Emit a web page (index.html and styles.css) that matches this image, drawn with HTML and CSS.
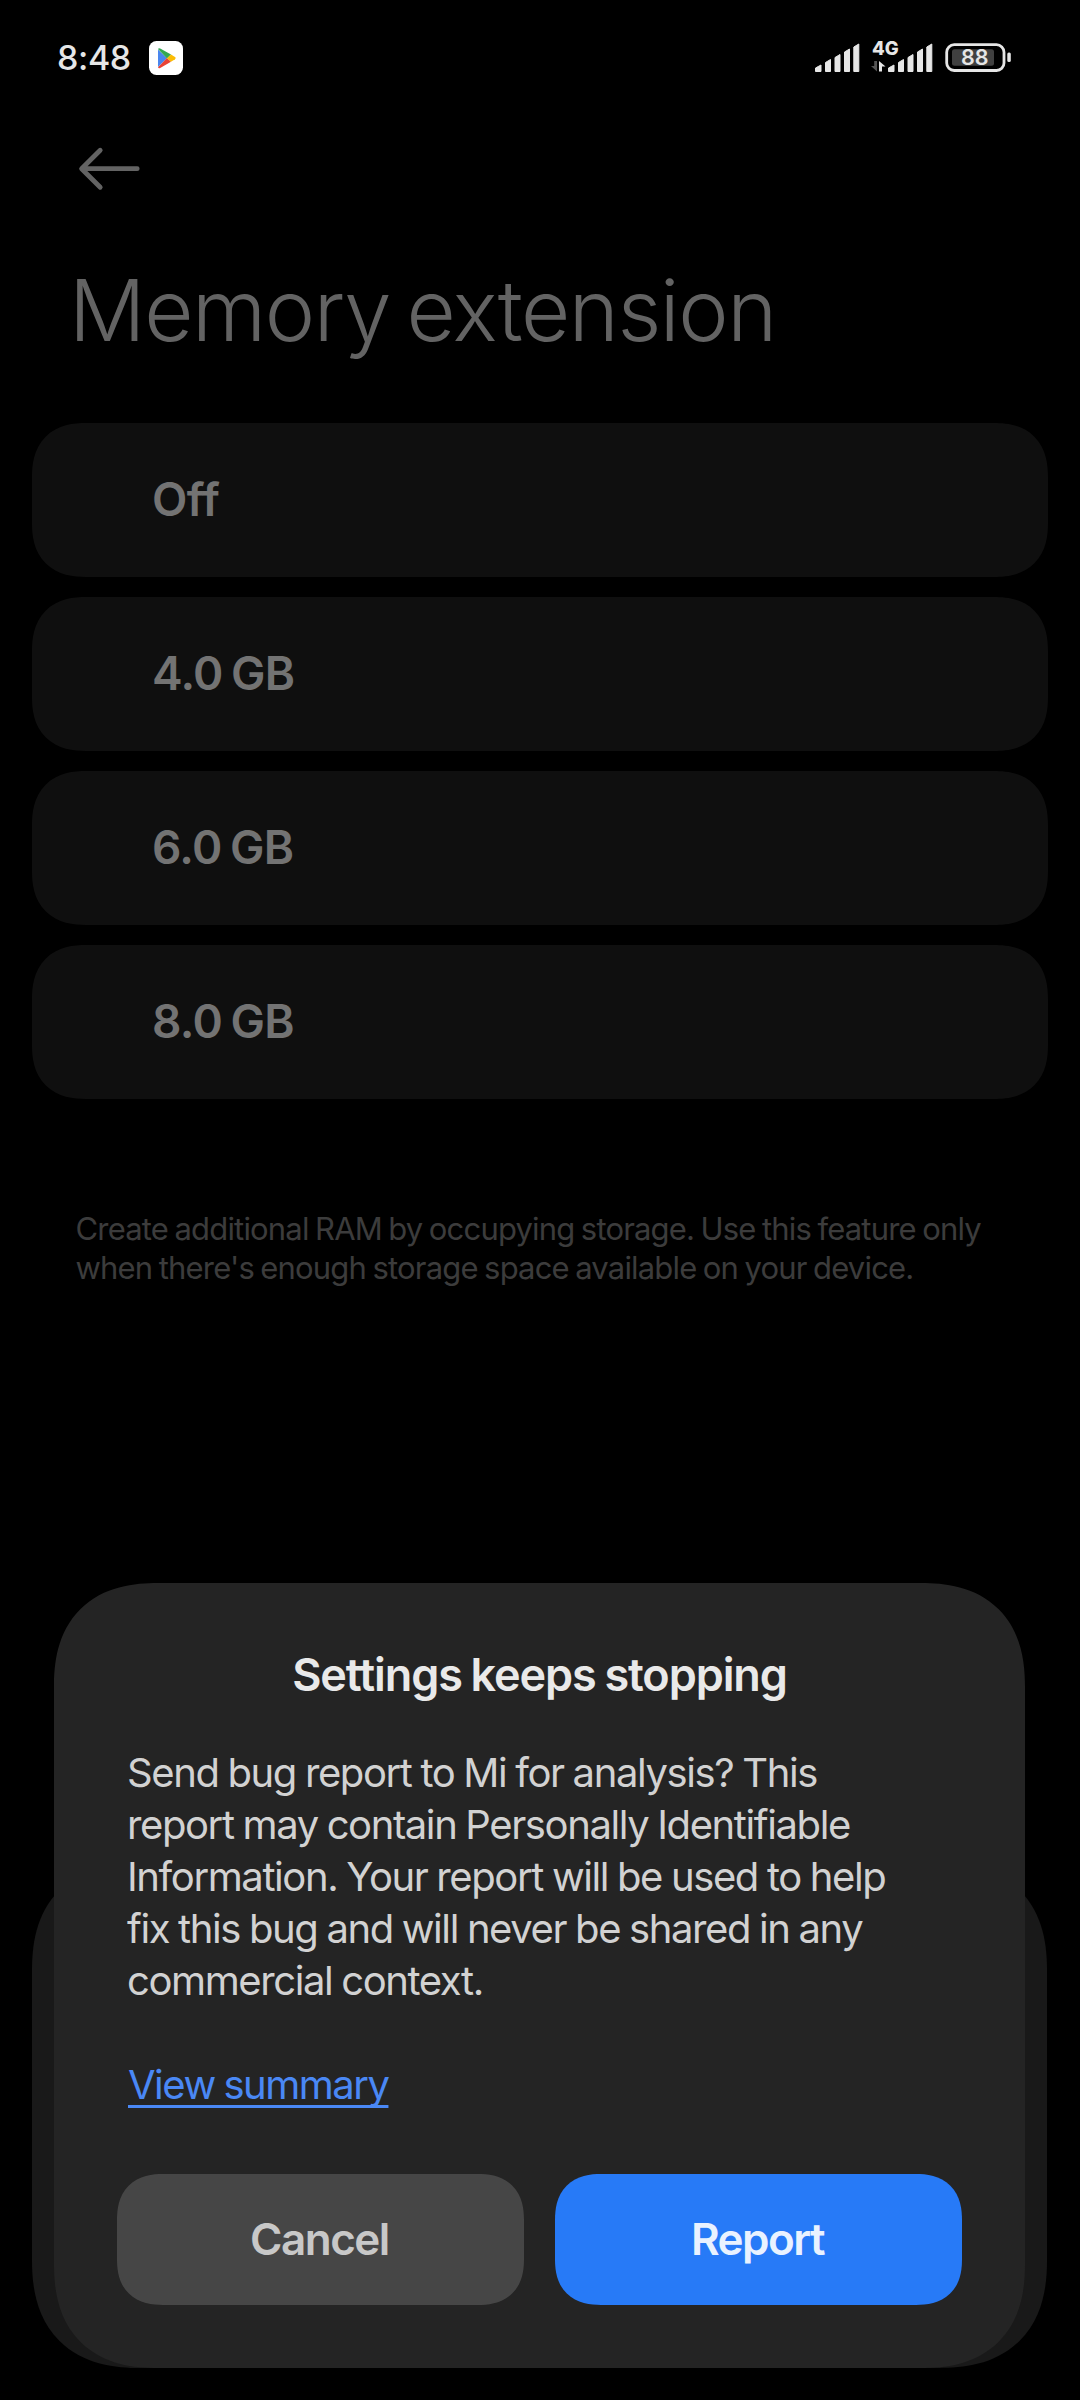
FILE: index.html
```
<!DOCTYPE html>
<html lang="en">
<head>
<meta charset="utf-8">
<title>Memory extension</title>
<link rel="stylesheet" href="styles.css">
</head>
<body>
<div class="screen">
  <header class="status">
    <div class="status-left">
      <span class="clock">8:48</span>
      <svg class="play" width="34" height="34" viewBox="0 0 34 34">
        <rect width="34" height="34" rx="7.5" fill="#fff"/>
        <path d="M9 8.5V26L18 17.2Z" fill="#4a86ee"/>
        <path d="M9 8q.6-1.3 2.2-.6L22 13.600L18 17.400Z" fill="#34a853"/>
        <path d="M9 26.300q.6 1.300 2.200.6L22 20.700L18 17Z" fill="#ea4335"/>
        <path d="M22 13.500L26 16q1.600 1.100 0 2.300L22 20.800L18 17.200Z" fill="#fbbc04"/>
      </svg>
    </div>
    <svg class="indicators" width="200" height="40" viewBox="812 38 200 40">
      <g id="bars" fill="#e6e6e6" stroke="#e6e6e6" stroke-width="1" stroke-linejoin="round">
        <path d="M815.500 68l5.500-3V71.500h-5.500z"/>
        <path d="M825.500 62.500l5-3V71.500h-5z"/>
        <path d="M835 57.500l5-3V71.500h-5z"/>
        <path d="M844.500 52l5-3V71.500h-5z"/>
        <path d="M853.800 47l5-3V71.500h-5z"/>
      </g>
      <use href="#bars" x="73"/>
      <text class="net" x="872" y="55">4G</text>
      <path d="M877 61v10.500L871 66h3.200V61z" fill="#555"/>
      <path d="M879 71.500V61l6.500 5.500h-3.500v5z" fill="#e6e6e6"/>
      <rect x="946.700" y="44.700" width="57.300" height="25.800" rx="7.500" fill="none" stroke="#e6e6e6" stroke-width="2.800"/>
      <rect x="952" y="49.300" width="42" height="16.500" rx="2.500" fill="#404040"/>
      <rect x="1007.300" y="52.500" width="3.500" height="9.500" rx="1.500" fill="#e6e6e6"/>
      <text class="charge" x="961" y="65.200">88</text>
    </svg>
  </header>

  <nav class="nav">
    <svg width="64" height="48" viewBox="0 0 64 48" fill="none" stroke="#636363" stroke-width="4.800" stroke-linecap="round" stroke-linejoin="round">
      <path d="M60.200 24.700H5M23.200 6.200L4.600 24.700L23.200 43.200"/>
    </svg>
  </nav>

  <h1 class="title">Memory extension</h1>

  <ul class="options">
    <li class="option">Off</li>
    <li class="option">4.0 GB</li>
    <li class="option">6.0 GB</li>
    <li class="option">8.0 GB</li>
  </ul>

  <p class="note">Create additional RAM by occupying storage. Use this feature only<br>when there's enough storage space available on your device.</p>

  <div class="sheet"></div>

  <section class="dialog">
    <h2 class="dialog-title">Settings keeps stopping</h2>
    <p class="dialog-text">Send bug report to Mi for analysis? This<br>report may contain Personally Identifiable<br>Information. Your report will be used to help<br>fix this bug and will never be shared in any<br>commercial context.</p>
    <a class="link">View summary</a>
    <div class="actions">
      <button class="btn">Cancel</button>
      <button class="btn btn-primary">Report</button>
    </div>
  </section>
</div>
</body>
</html>
```

FILE: styles.css
```
* { box-sizing: border-box; margin: 0; padding: 0; }

body {
  background: #000;
  font-family: Inter, "Liberation Sans", sans-serif;
}

.screen {
  position: relative;
  width: 1080px;
  height: 2400px;
  overflow: hidden;
  background: #000;
  display: flex;
  flex-direction: column;
}

/* Status bar */
.status {
  height: 116px;
  padding: 0 68px 0 57px;
  display: flex;
  align-items: center;
  justify-content: space-between;
}
.status-left { display: flex; align-items: center; gap: 18px; }
.clock {
  width: 74px;
  font-size: 34px;
  font-weight: 500;
  line-height: 40px;
  letter-spacing: -0.4px;
  color: #e6e6e6;
  white-space: nowrap;
}
.play, .indicators { display: block; }
.net { font-size: 18.5px; font-weight: 800; fill: #e6e6e6; }
.charge { font-size: 21.5px; font-weight: 600; fill: #e6e6e6; }

/* Page heading */
.nav { height: 145px; padding: 28px 0 0 77px; }
.nav svg { display: block; }
.title {
  height: 162px;
  padding-left: 69px;
  font-size: 85px;
  font-weight: 300;
  line-height: 100px;
  letter-spacing: -1.4px;
  word-spacing: -6px;
  color: #636363;
}

/* Option cards */
.options {
  list-style: none;
  padding: 0 32px;
  display: flex;
  flex-direction: column;
  gap: 20px;
}
.option {
  height: 154px;
  padding: 0 120px 2px;
  display: flex;
  align-items: center;
  border-radius: 54px;
  corner-shape: superellipse(1.25);
  background: #0f0f0f;
  font-size: 46px;
  font-weight: 600;
  letter-spacing: -0.7px;
  word-spacing: -2.5px;
  color: #737373;
}
.note {
  margin-top: 110px;
  padding-left: 75.5px;
  font-size: 31px;
  line-height: 39px;
  letter-spacing: -0.82px;
  word-spacing: -1.5px;
  color: #3c3c3c;
  white-space: nowrap;
}

/* Panel visible behind the dialog */
.sheet {
  position: absolute;
  left: 32px;
  top: 1863px;
  width: 1015px;
  height: 505px;
  border-radius: 108px;
  corner-shape: superellipse(1.25);
  background: #191919;
}

/* Crash dialog */
.dialog {
  position: absolute;
  left: 54px;
  top: 1583px;
  width: 971px;
  height: 785px;
  padding: 66px 63px 63px;
  display: flex;
  flex-direction: column;
  border-radius: 104px;
  corner-shape: superellipse(1.25);
  background: #242424;
}
.dialog-title {
  font-size: 45px;
  font-weight: 600;
  line-height: 52px;
  letter-spacing: -1.1px;
  word-spacing: -1.5px;
  text-align: center;
  color: #e9e9e9;
}
.dialog-text, .link {
  margin-left: 10px;
  font-size: 40px;
  line-height: 52px;
  letter-spacing: -1.4px;
  word-spacing: -0.9px;
  white-space: nowrap;
}
.dialog-text { margin-top: 46px; color: #d2d2d2; }
.link {
  align-self: flex-start;
  margin-top: 52px;
  margin-left: 11px;
  letter-spacing: -1.5px;
  color: #4a88f5;
  text-decoration: underline;
  text-decoration-thickness: 3px;
  text-underline-offset: 6px;
  text-decoration-skip-ink: none;
}
.actions { margin-top: auto; display: flex; gap: 31px; }
.btn {
  flex: 1;
  height: 131px;
  padding: 0 2px 2px 0;
  border: 0;
  border-radius: 46px;
  corner-shape: superellipse(1.25);
  background: #464646;
  font: 600 44px/52px Inter, "Liberation Sans", sans-serif;
  letter-spacing: -1.5px;
  color: #c8c8c8;
}
.btn-primary { background: #277af7; color: #e9f2ff; }
```
